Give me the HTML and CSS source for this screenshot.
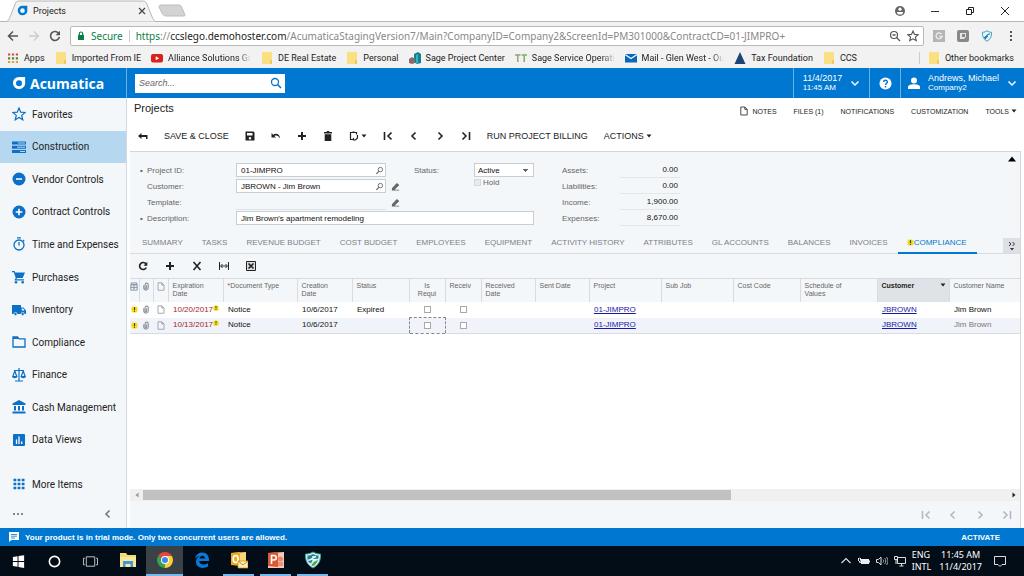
FILE: index.html
```
<!DOCTYPE html>
<html lang="en">
  <head>
    <meta charset="UTF-8" />
    <meta name="viewport" content="width=device-width, initial-scale=1.0" />
    <title>Projects</title>
    <link rel="stylesheet" href="styles.css">
  </head>
  <body>
    <!-- shared icons -->
    <svg class="sprite" aria-hidden="true">
      <symbol id="i-logo" viewBox="0 0 16 16"><path fill="currentColor" fill-rule="evenodd" d="M8 1h7v8a7 7 0 1 1-7-8zM8 4.800a3.400 3.400 0 1 0 0 6.800 3.400 3.400 0 0 0 0-6.800z"/></symbol>
      <symbol id="i-folder" viewBox="0 0 12 12"><path fill="#fbdf83" d="M1 0h10v12H1z"/><path fill="#f0c95a" d="M9 8h2v4H9z"/></symbol>
      <symbol id="i-search" viewBox="0 0 12 12"><circle cx="5" cy="5" r="3.500" fill="none" stroke="currentColor" stroke-width="1.300"/><path d="M7.500 7.500l3.500 3.500" stroke="currentColor" stroke-width="1.600"/></symbol>
      <symbol id="i-find" viewBox="0 0 10 10"><circle cx="6" cy="4" r="2.500" fill="none" stroke="currentColor"/><path d="M4.200 6L1.500 8.700" stroke="currentColor" stroke-width="1.300"/></symbol>
      <symbol id="i-down" viewBox="0 0 10 10"><path d="M1.500 3.500L5 7l3.500-3.500" fill="none" stroke="currentColor" stroke-width="1.500"/></symbol>
      <symbol id="i-caret" viewBox="0 0 6 6"><path fill="currentColor" d="M.5 1.500h5L3 4.500z"/></symbol>
      <symbol id="i-shield" viewBox="0 0 16 16"><path fill="#e8f7fb" stroke="#3a9cb8" stroke-width="1.300" d="M8 1c2 1.500 4 2 6 2 .3 6-1.500 9.500-6 12C3.500 12.500 1.700 9 2 3c2 0 4-.5 6-2z"/><path fill="none" stroke="#2379b8" stroke-width="1.500" d="M4 10c3 0 3-4 8-5M5 12l4-4"/></symbol>
      <symbol id="i-page" viewBox="0 0 10 12"><path fill="none" stroke="currentColor" d="M1 1h5l3 3v7H1zM6 1v3h3"/></symbol>
      <symbol id="i-clip" viewBox="0 0 8 10"><path fill="none" stroke="currentColor" stroke-width="1.200" d="M1.500 3.500v3a2.500 2.500 0 0 0 5 0V3a1.700 1.700 0 0 0-3.500 0v3.500a.8.8 0 0 0 1.700 0V3.500"/></symbol>
      <symbol id="i-warn" viewBox="0 0 8 8"><rect x=".5" y=".5" width="7" height="7" rx="2" fill="#f3dc1c"/><path d="M4 1.500v3M4 5.500v1" stroke="#333" stroke-width="1.300"/></symbol>
      <symbol id="i-plus" viewBox="0 0 10 10"><path d="M5 1v8M1 5h8" stroke="currentColor" stroke-width="2"/></symbol>
      <symbol id="i-first" viewBox="0 0 10 10"><path d="M1.500 1v8M8.500 1.500L5 5l3.500 3.500" fill="none" stroke="currentColor" stroke-width="1.600"/></symbol>
      <symbol id="i-prev" viewBox="0 0 10 10"><path d="M6.500 1.500L3 5l3.500 3.500" fill="none" stroke="currentColor" stroke-width="1.600"/></symbol>
      <symbol id="i-next" viewBox="0 0 10 10"><path d="M3.500 1.500L7 5 3.500 8.500" fill="none" stroke="currentColor" stroke-width="1.600"/></symbol>
      <symbol id="i-last" viewBox="0 0 10 10"><path d="M8.500 1v8M1.500 1.500L5 5 1.500 8.500" fill="none" stroke="currentColor" stroke-width="1.600"/></symbol>
      <symbol id="i-pencil" viewBox="0 0 10 10"><path fill="currentColor" d="M1 7l5.500-6 2.700 2.200L4 8.500h5v1H1z"/></symbol>
    </svg>

    <div class="tabstrip">
      <div class="browser-tab">
        <svg class="tab-shape" viewBox="0 0 158 22" preserveAspectRatio="none"><path d="M0 22C5 22 5 19 7 15L11 5c1-3 2-4 5-4h126c3 0 4 1 5 4l5 12c2 4 3 5 6 5z" fill="#f2f2f2" stroke="#b5b5b5"/></svg>
        <svg class="icon-s blue"><use href="#i-logo"/></svg>
        <span>Projects</span>
        <button class="tab-close" aria-label="Close tab"><svg viewBox="0 0 8 8"><path d="M1 1l6 6M7 1L1 7" stroke="#444" stroke-width="1.200"/></svg></button>
      </div>
      <svg class="new-tab" viewBox="0 0 28 13"><path d="M3 1h18c2 0 2 1 3 3l3 7c0 1 0 1-2 1H8c-2 0-3-1-4-3L1 3c0-1 0-2 2-2z" fill="#d3d3d3" stroke="#bdbdbd"/></svg>
      <div class="window-buttons">
        <button aria-label="Profile"><svg viewBox="0 0 12 12"><circle cx="6" cy="6" r="5" fill="#666"/><circle cx="6" cy="4.200" r="1.600" fill="#fff"/><path d="M3 7h6c0 2-1 2.500-3 2.500S3 9 3 7z" fill="#fff"/></svg></button>
        <button aria-label="Minimize"><svg viewBox="0 0 12 12"><path d="M2 6.500h8" stroke="#333"/></svg></button>
        <button aria-label="Restore"><svg viewBox="0 0 12 12"><path d="M2.500 4.500h5v5h-5zM4.500 4V2.500h5v5H8" fill="none" stroke="#222"/></svg></button>
        <button aria-label="Close"><svg viewBox="0 0 12 12"><path d="M2 2l8 8M10 2l-8 8" stroke="#222"/></svg></button>
      </div>
    </div>

    <div class="browser-bar">
      <button aria-label="Back"><svg viewBox="0 0 12 12"><path d="M11 6H2M6 1.500L1.500 6 6 10.500" fill="none" stroke="#555" stroke-width="1.500"/></svg></button>
      <button aria-label="Forward"><svg viewBox="0 0 12 12"><path d="M1 6h9M6 1.500L10.500 6 6 10.500" fill="none" stroke="#ccc" stroke-width="1.300"/></svg></button>
      <button aria-label="Reload"><svg viewBox="0 0 12 12"><path d="M9.800 3.500A4.500 4.500 0 1 0 10.400 7" fill="none" stroke="#555" stroke-width="1.600"/><path d="M11 .8v4.500H6.500z" fill="#555"/></svg></button>
      <div class="address">
        <svg class="lock" viewBox="0 0 8 10"><path d="M1 4h6v5H1z" fill="#0b8043"/><path d="M2.300 4V2.700a1.700 1.700 0 0 1 3.400 0V4" fill="none" stroke="#0b8043" stroke-width="1.200"/></svg>
        <span class="secure">Secure</span>
        <div class="url" role="textbox" aria-label="Address"><span class="scheme">https</span>://<span class="host">ccslego.demohoster.com</span>/AcumaticaStagingVersion7/Main?CompanyID=Company2&amp;ScreenId=PM301000&amp;ContractCD=01-JIMPRO+</div>
        <button aria-label="Zoom"><svg viewBox="0 0 12 12"><circle cx="5" cy="5" r="3.500" fill="none" stroke="#555" stroke-width="1.200"/><path d="M7.500 7.500l3.500 3.500M3.500 5h3" stroke="#555" stroke-width="1.300"/></svg></button>
        <button aria-label="Bookmark"><svg viewBox="0 0 12 12"><path d="M6 1l1.500 3.400 3.700.3-2.800 2.400.9 3.600L6 8.800l-3.300 1.900.9-3.600L.8 4.700l3.700-.3z" fill="none" stroke="#555" stroke-width="1.100"/></svg></button>
      </div>
      <div class="extensions">
        <button aria-label="Extension"><svg viewBox="0 0 12 12"><path d="M0 0h12v12H0z" fill="#b5b5b5"/><path d="M8.500 4A3 3 0 1 0 9 6.500H6.500" fill="none" stroke="#eee" stroke-width="1.300"/></svg></button>
        <button aria-label="Extension"><svg viewBox="0 0 12 12"><rect width="12" height="12" rx="2" fill="#888"/><path d="M3 3h6v4L7 9H3z" fill="#e5e5e5"/><path d="M5 4h3v3H5z" fill="#888"/></svg></button>
        <button aria-label="Security"><svg><use href="#i-shield"/></svg></button>
        <button aria-label="Menu"><svg viewBox="0 0 12 12"><path d="M6 1v2M6 5v2M6 9v2" stroke="#555" stroke-width="2"/></svg></button>
      </div>
    </div>

    <nav class="bookmarks">
      <a href="#"><svg viewBox="0 0 12 12"><path d="M1 2.500h10" stroke="#d9443f" stroke-width="2.200" stroke-dasharray="2.200 1.700"/><path d="M1 6.300h10" stroke="#4a8a4a" stroke-width="2.200" stroke-dasharray="2.200 1.700"/><path d="M1 10h10" stroke="#e0a030" stroke-width="2.200" stroke-dasharray="2.200 1.700"/></svg><span>Apps</span></a>
      <a href="#"><svg><use href="#i-folder"/></svg><span>Imported From IE</span></a>
      <a href="#"><svg viewBox="0 0 12 12"><rect y="2" width="12" height="8.500" rx="2" fill="#d8201c"/><path d="M4.700 4.200l3.500 2-3.500 2z" fill="#fff"/></svg><span class="fade">Alliance Solutions Gr</span></a>
      <a href="#"><svg><use href="#i-folder"/></svg><span>DE Real Estate</span></a>
      <a href="#"><svg><use href="#i-folder"/></svg><span>Personal</span></a>
      <a href="#"><svg viewBox="0 0 12 12"><path d="M5 2l4-2 3 2v9l-4 1-3-2z" fill="#137f91"/><path d="M7 3l2-1v9l-2 1z" fill="#35b3c0"/><path d="M0 7l3-2 3 2v4l-3 1-3-1z" fill="#8b6b68"/></svg><span>Sage Project Center</span></a>
      <a href="#"><svg viewBox="0 0 12 12"><path d="M0 3h5.500M2.800 3v7" stroke="#98a083" stroke-width="1.500"/><path d="M6.500 3H12M9.200 3v7" stroke="#82aa63" stroke-width="1.500"/></svg><span class="fade">Sage Service Operati</span></a>
      <a href="#"><svg viewBox="0 0 12 12"><path d="M0 2h12v8.500H0z" fill="#0968b9"/><path d="M0 2.500l6 4 6-4" fill="none" stroke="#fff" stroke-width="1.200"/></svg><span class="fade">Mail - Glen West - Ou</span></a>
      <a href="#"><svg viewBox="0 0 12 12"><path d="M6 0l5.500 12H.5z" fill="#1d4675"/></svg><span>Tax Foundation</span></a>
      <a href="#"><svg><use href="#i-folder"/></svg><span>CCS</span></a>
      <a href="#" class="other"><svg><use href="#i-folder"/></svg><span>Other bookmarks</span></a>
    </nav>

    <header class="app-header">
      <a href="#" class="brand"><svg><use href="#i-logo"/></svg><span>Acumatica</span></a>
      <form class="search">
        <input type="search" placeholder="Search..." aria-label="Search">
        <button type="button" aria-label="Search"><svg><use href="#i-search"/></svg></button>
      </form>
      <button class="head-item date"><span class="two-line"><span>11/4/2017</span><small>11:45 AM</small></span><svg><use href="#i-down"/></svg></button>
      <button class="head-item help" aria-label="Help"><svg viewBox="0 0 14 14"><circle cx="7" cy="7" r="6.500" fill="#fff"/><path d="M5 5.500c0-3 4.200-2.500 4 0C9 7 7 6.800 7 8.500M7 9.800v1.500" fill="none" stroke="#0077d0" stroke-width="1.500"/></svg></button>
      <button class="head-item user"><svg class="person" viewBox="0 0 12 12"><circle cx="6" cy="3.500" r="3" fill="#fff"/><path d="M0 12V10c0-2 3-2.800 6-2.800s6 .8 6 2.800v2z" fill="#fff"/></svg><span class="two-line"><span>Andrews, Michael</span><small>Company2</small></span><svg><use href="#i-down"/></svg></button>
    </header>

    <div class="workspace">
      <aside class="sidebar">
        <nav class="menu">
          <a href="#"><svg viewBox="0 0 14 14"><path d="M7 1l1.700 4.200 4.500.3-3.500 2.900 1.100 4.400L7 10.400l-3.800 2.400 1.100-4.400L.8 5.500l4.500-.3z" fill="none" stroke="currentColor" stroke-width="1.200"/></svg>Favorites</a>
          <a href="#" class="active"><svg viewBox="0 0 14 14"><path d="M0 1.500h14v3H0zM0 5.700h14v3H0zM0 10h14v3H0z" fill="currentColor"/><path d="M6 3h7M5 7.200h8M8 11.500h5" stroke="#b5d8f0"/></svg>Construction</a>
          <a href="#"><svg viewBox="0 0 14 14"><circle cx="7" cy="7" r="6.500" fill="currentColor"/><path d="M4 7h6" stroke="#fff" stroke-width="1.500"/></svg>Vendor Controls</a>
          <a href="#"><svg viewBox="0 0 14 14"><circle cx="7" cy="7" r="6.500" fill="currentColor"/><path d="M3.700 7h6.600M7 3.700v6.600" stroke="#fff" stroke-width="1.600"/></svg>Contract Controls</a>
          <a href="#"><svg viewBox="0 0 14 14"><circle cx="7" cy="8" r="5" fill="none" stroke="currentColor" stroke-width="1.300"/><path d="M5 .8h4M7 5v3.500M11 3l1.200 1.200" stroke="currentColor" stroke-width="1.300"/></svg>Time and Expenses</a>
          <a href="#"><svg viewBox="0 0 14 14"><path d="M0 1h2.500l.7 1.500H13L10.700 8H5l-.7 1.300H12v1.200H2.500L3.700 7.800 1.800 2.200H0z" fill="currentColor"/><circle cx="4" cy="12.300" r="1.300" fill="currentColor"/><circle cx="10.700" cy="12.300" r="1.300" fill="currentColor"/></svg>Purchases</a>
          <a href="#"><svg viewBox="0 0 14 14"><path d="M0 2h9v2.500h2.500L14 7.500v3.500H0z" fill="currentColor"/><path d="M9.800 5.500h1.400L12.600 7.500H9.800z" fill="#fff"/><circle cx="3.500" cy="11" r="1.600" fill="currentColor" stroke="#f4f7fa" stroke-width=".7"/><circle cx="10.700" cy="11" r="1.600" fill="currentColor" stroke="#f4f7fa" stroke-width=".7"/></svg>Inventory</a>
          <a href="#"><svg viewBox="0 0 14 14"><path d="M1 2h4.500L7 3.800h6v8.200H1z" fill="none" stroke="currentColor" stroke-width="1.300"/><path d="M1 2h4.500L7 4H1z" fill="currentColor"/></svg>Compliance</a>
          <a href="#"><svg viewBox="0 0 14 14"><path d="M7 0v12.500M3 13h8M2 2.500h10M2.800 3L.8 8.500M2.800 3l2 5.500M11.200 3l-2 5.500M11.200 3l2 5.500" fill="none" stroke="currentColor" stroke-width="1.200"/><path d="M0 8h5.500c0 3-5.500 3-5.500 0zM8.500 8H14c0 3-5.500 3-5.500 0z" fill="currentColor"/></svg>Finance</a>
          <a href="#"><svg viewBox="0 0 14 14"><path d="M7 0l6.500 3.500V5H.5V3.500zM2 6h2v4.500H2zM6 6h2v4.500H6zM10 6h2v4.500h-2zM.5 11.500h13v2H.5z" fill="currentColor"/></svg>Cash Management</a>
          <a href="#"><svg viewBox="0 0 14 14"><rect x="1" y="1" width="12" height="12" rx="1" fill="currentColor"/><path d="M4.500 6.500V11M7 3.500V11M9.700 8.500V11" stroke="#fff" stroke-width="1.300"/></svg>Data Views</a>
        </nav>
        <a href="#" class="more"><svg viewBox="0 0 14 14"><path d="M1.500 3h11M1.500 7h11M1.500 11h11" stroke="currentColor" stroke-width="2.600" stroke-dasharray="2.800 1.300"/></svg>More Items</a>
        <div class="side-foot">
          <button aria-label="Options"><svg viewBox="0 0 12 12"><path d="M1 6h10" stroke="#888" stroke-width="2" stroke-dasharray="2 2"/></svg></button>
          <button aria-label="Collapse menu"><svg><use href="#i-prev"/></svg></button>
        </div>
      </aside>

      <main>
        <div class="title-row">
          <h1>Projects</h1>
          <div class="page-links">
            <button><svg><use href="#i-page"/></svg>NOTES</button>
            <button>FILES (1)</button>
            <button>NOTIFICATIONS</button>
            <button>CUSTOMIZATION</button>
            <button>TOOLS<svg class="caret"><use href="#i-caret"/></svg></button>
          </div>
        </div>

        <div class="actions">
          <button aria-label="Back"><svg viewBox="0 0 10 10"><path d="M0 5l3.500-3v2H9.500v4H8V6H3.500v2z" fill="currentColor"/></svg></button>
          <button class="label">SAVE &amp; CLOSE</button>
          <button aria-label="Save"><svg viewBox="0 0 10 10"><path fill-rule="evenodd" d="M.5.5h8l1 1v8h-9zM2 2v2.500h5.500V2zM5 6a1.300 1.300 0 1 0 0 2.600A1.300 1.300 0 0 0 5 6z" fill="currentColor"/></svg></button>
          <button aria-label="Undo"><svg viewBox="0 0 10 10"><path d="M.5 2v4.500H5L3.400 5C5.500 3.800 7.500 4.800 9 7.500 9 3.500 5.500 1.500 2.200 3.700z" fill="currentColor"/></svg></button>
          <button aria-label="Add"><svg><use href="#i-plus"/></svg></button>
          <button aria-label="Delete"><svg viewBox="0 0 10 10"><path d="M1 1h2.500L4 0h2l.5 1H9v1.500H1zM1.700 3.200h6.600V10H1.700z" fill="currentColor"/></svg></button>
          <button aria-label="Clipboard"><svg viewBox="0 0 10 10"><path d="M4 8.500H1.500v-7h6v2M3.500 1h2M8.500 4v3L6.500 9H4.500V7" fill="none" stroke="currentColor" stroke-width="1.200"/></svg><svg class="caret"><use href="#i-caret"/></svg></button>
          <button aria-label="First"><svg><use href="#i-first"/></svg></button>
          <button aria-label="Previous"><svg><use href="#i-prev"/></svg></button>
          <button aria-label="Next"><svg><use href="#i-next"/></svg></button>
          <button aria-label="Last"><svg><use href="#i-last"/></svg></button>
          <button class="label">RUN PROJECT BILLING</button>
          <button class="label">ACTIONS<svg class="caret"><use href="#i-caret"/></svg></button>
        </div>

        <section class="panel">
          <form class="summary">
            <div class="fields">
              <label class="name req" for="projectId">Project ID:</label>
              <div class="lookup"><input id="projectId" type="text" value="01-JIMPRO"><button type="button" aria-label="Find project"><svg><use href="#i-find"/></svg></button></div>
              <span></span>
              <label for="status">Status:</label>
              <select id="status"><option>Active</option></select>

              <label class="name" for="customer">Customer:</label>
              <div class="lookup"><input id="customer" type="text" value="JBROWN - Jim Brown"><button type="button" aria-label="Find customer"><svg><use href="#i-find"/></svg></button></div>
              <button type="button" class="edit" aria-label="Edit customer"><svg><use href="#i-pencil"/></svg></button>
              <span></span>
              <label class="hold"><input type="checkbox" disabled>Hold</label>

              <label class="name" for="template">Template:</label>
              <input id="template" class="flat" type="text" readonly>
              <button type="button" class="edit" aria-label="Edit template"><svg><use href="#i-pencil"/></svg></button>
              <span></span>
              <span></span>

              <label class="name req" for="description">Description:</label>
              <input id="description" class="wide" type="text" value="Jim Brown's apartment remodeling">
            </div>
            <div class="totals">
              <label for="assets">Assets:</label><input id="assets" type="text" value="0.00" readonly>
              <label for="liabilities">Liabilities:</label><input id="liabilities" type="text" value="0.00" readonly>
              <label for="income">Income:</label><input id="income" type="text" value="1,900.00" readonly>
              <label for="expenses">Expenses:</label><input id="expenses" type="text" value="8,670.00" readonly>
            </div>
            <button type="button" class="collapse" aria-label="Collapse"><svg viewBox="0 0 8 6"><path d="M0 5.500L4 .5l4 5z" fill="#000"/></svg></button>
          </form>

          <div class="tabs">
            <button>SUMMARY</button>
            <button>TASKS</button>
            <button>REVENUE BUDGET</button>
            <button>COST BUDGET</button>
            <button>EMPLOYEES</button>
            <button>EQUIPMENT</button>
            <button>ACTIVITY HISTORY</button>
            <button>ATTRIBUTES</button>
            <button>GL ACCOUNTS</button>
            <button>BALANCES</button>
            <button>INVOICES</button>
            <button class="current"><svg><use href="#i-warn"/></svg>COMPLIANCE</button>
            <button class="overflow" aria-label="More tabs"><svg viewBox="0 0 8 10"><path d="M1 1l2 2-2 2M4.500 1l2 2-2 2" fill="none" stroke="#333"/><path d="M2 7h4L4 9.500z" fill="#333"/></svg></button>
          </div>

          <div class="grid-tools">
            <button aria-label="Refresh"><svg viewBox="0 0 10 10"><path d="M8 3A3.500 3.500 0 1 0 8.300 6.500" fill="none" stroke="currentColor" stroke-width="1.700"/><path d="M9.300.8v4H5.500z" fill="currentColor"/></svg></button>
            <button aria-label="Add row"><svg><use href="#i-plus"/></svg></button>
            <button aria-label="Delete row"><svg viewBox="0 0 10 10"><path d="M1.500 1l7 8M8.500 1l-7 8" stroke="currentColor" stroke-width="1.600"/></svg></button>
            <button aria-label="Fit to screen"><svg viewBox="0 0 10 10"><path d="M.5 1v8M9.500 1v8M2 5h6M3.500 3L1.500 5l2 2M6.500 3l2 2-2 2" fill="none" stroke="currentColor"/></svg></button>
            <button aria-label="Export to Excel"><svg viewBox="0 0 10 10"><path d="M.5.500h9v9h-9z" fill="#ddd" stroke="currentColor"/><path d="M2.500 2.500l5 5M7.500 2.500l-5 5" stroke="currentColor" stroke-width="1.700"/></svg></button>
          </div>

          <div class="grid-body">
            <table>
              <colgroup>
                <col class="c-tiny"><col class="c-clip"><col class="c-note"><col class="c-date"><col class="c-type"><col class="c-date"><col class="c-status"><col class="c-check"><col class="c-check"><col class="c-sent"><col class="c-sent"><col class="c-name"><col class="c-name"><col class="c-code"><col class="c-sched"><col class="c-name"><col>
              </colgroup>
              <thead>
                <tr>
                  <th class="ic"><svg viewBox="0 0 8 10"><path d="M1 1h6v2H1zM.5 3h7v6h-7zM.5 6h7M3 4.500h2M3 7.500h2" fill="none" stroke="#7f8b9c"/></svg></th>
                  <th class="ic"><svg><use href="#i-clip"/></svg></th>
                  <th class="ic"><svg><use href="#i-page"/></svg></th>
                  <th>Expiration<br>Date</th>
                  <th class="must">Document Type</th>
                  <th>Creation<br>Date</th>
                  <th>Status</th>
                  <th class="mid">Is<br>Requi</th>
                  <th>Receiv</th>
                  <th>Received<br>Date</th>
                  <th>Sent Date</th>
                  <th>Project</th>
                  <th>Sub Job</th>
                  <th>Cost Code</th>
                  <th>Schedule of<br>Values</th>
                  <th class="sorted"><span>Customer<svg class="caret"><use href="#i-caret"/></svg></span></th>
                  <th>Customer Name</th>
                </tr>
              </thead>
              <tbody>
                <tr>
                  <td class="ic"><svg><use href="#i-warn"/></svg></td>
                  <td class="ic"><svg><use href="#i-clip"/></svg></td>
                  <td class="ic"><svg><use href="#i-page"/></svg></td>
                  <td class="expired">10/20/2017<svg><use href="#i-warn"/></svg></td>
                  <td>Notice</td>
                  <td>10/6/2017</td>
                  <td>Expired</td>
                  <td class="mid"><input type="checkbox" aria-label="Is required"></td>
                  <td class="mid"><input type="checkbox" aria-label="Received"></td>
                  <td></td>
                  <td></td>
                  <td><a href="#">01-JIMPRO</a></td>
                  <td></td>
                  <td></td>
                  <td></td>
                  <td><a href="#">JBROWN</a></td>
                  <td>Jim Brown</td>
                </tr>
                <tr class="selected">
                  <td class="ic"><svg><use href="#i-warn"/></svg></td>
                  <td class="ic"><svg><use href="#i-clip"/></svg></td>
                  <td class="ic"><svg><use href="#i-page"/></svg></td>
                  <td class="expired">10/13/2017<svg><use href="#i-warn"/></svg></td>
                  <td>Notice</td>
                  <td>10/6/2017</td>
                  <td></td>
                  <td class="mid focus"><input type="checkbox" aria-label="Is required"></td>
                  <td class="mid"><input type="checkbox" aria-label="Received"></td>
                  <td></td>
                  <td></td>
                  <td><a href="#">01-JIMPRO</a></td>
                  <td></td>
                  <td></td>
                  <td></td>
                  <td><a href="#">JBROWN</a></td>
                  <td class="dim">Jim Brown</td>
                </tr>
              </tbody>
            </table>
          </div>

          <div class="scrollbar">
            <button aria-label="Scroll left"><svg viewBox="0 0 6 6"><path d="M4.500.5v5L1.500 3z" fill="#999"/></svg></button>
            <div class="track"><div class="thumb"></div></div>
            <button aria-label="Scroll right"><svg viewBox="0 0 6 6"><path d="M1.500.5v5L4.500 3z" fill="#222"/></svg></button>
          </div>
          <div class="pager">
            <button aria-label="First page"><svg><use href="#i-first"/></svg></button>
            <button aria-label="Previous page"><svg><use href="#i-prev"/></svg></button>
            <button aria-label="Next page"><svg><use href="#i-next"/></svg></button>
            <button aria-label="Last page"><svg><use href="#i-last"/></svg></button>
          </div>
        </section>
      </main>
    </div>

    <div class="trial">
      <svg viewBox="0 0 10 10"><path d="M0 0h10v8H2.500L0 10z" fill="#fff"/><path d="M2 2.500h6M2 4.200h6M2 6h4" stroke="#0077d0" stroke-width=".8"/></svg>
      <span>Your product is in trial mode. Only two concurrent users are allowed.</span>
      <button>ACTIVATE</button>
    </div>

    <footer class="taskbar">
      <button class="sys" aria-label="Start"><svg viewBox="0 0 16 16"><path d="M2 3.200l5-.8v5.100H2zM8 2.200l6-1v6.300H8zM2 8.500h5v5.100l-5-.8zM8 8.500h6v6.300l-6-1z" fill="#fff"/></svg></button>
      <button class="sys" aria-label="Cortana"><svg viewBox="0 0 16 16"><circle cx="8" cy="8" r="5.500" fill="none" stroke="#fff" stroke-width="1.700"/></svg></button>
      <button class="sys" aria-label="Task view"><svg viewBox="0 0 16 16"><path d="M3.500 3h9v10h-9zM2 4.500H.5v7H2M14 4.500h1.500v7H14" fill="none" stroke="#ccc"/></svg></button>
      <div class="apps">
        <button aria-label="File Explorer"><svg viewBox="0 0 18 18"><path d="M1 2h6l1.500 2H17v12H1z" fill="#f6d774"/><path d="M1 6h16v10H1z" fill="#fae69b"/><path d="M4 10h10v6h-2.500v-3h-5v3H4z" fill="#3a9ad5"/></svg></button>
        <button class="on" aria-label="Chrome"><svg viewBox="0 0 18 18"><path d="M9 9L2.100 5A8 8 0 0 1 15.900 5z" fill="#e04a3c"/><path d="M9 9l6.900-4A8 8 0 0 1 9 17z" fill="#fad133"/><path d="M9 9v8A8 8 0 0 1 2.100 5z" fill="#35a351"/><path d="M9 5h6.900L12 12z" fill="#fad133"/><circle cx="9" cy="9" r="4" fill="#fff"/><circle cx="9" cy="9" r="3" fill="#4284f3"/></svg></button>
        <button aria-label="Edge"><svg viewBox="0 0 18 18"><path d="M2 8C3 3 6 1.500 9.300 1.500c4.500 0 7 3.200 6.700 8.500H6.200c.3 4 5 4.500 8.800 2.200v3.300C9.500 18.500 2.800 16.500 3 10.500 3 7.800 5 6 6.800 5 4.500 5.300 3 6.500 2 8zm4.500-.5h5.500c0-3.800-5-3.800-5.500 0z" fill="#0b78d8"/></svg></button>
        <button class="open" aria-label="Outlook"><svg viewBox="0 0 18 18"><path d="M1 2l15-1v13H1z" fill="#f8d679"/><path d="M1 2l9-1v14l-9-1z" fill="#efa91f"/><ellipse cx="5.700" cy="8" rx="2.500" ry="3.500" fill="none" stroke="#fff" stroke-width="1.600"/><path d="M8 10h10v7H8z" fill="#fcedb9" stroke="#c58c19" stroke-width=".7"/><path d="M8 10l5 4 5-4" fill="none" stroke="#c58c19"/></svg></button>
        <button class="open" aria-label="PowerPoint"><svg viewBox="0 0 18 18"><path d="M1 2l16-1v16H1z" fill="#f8cbb7"/><path d="M1 2l10-1v15L1 15z" fill="#d95a34"/><path d="M4.500 13V4.500H7c3 0 3 4.500 0 4.500H4.500" fill="none" stroke="#fff" stroke-width="1.600"/><circle cx="13.500" cy="8" r="2.500" fill="#e68664"/><path d="M11 12h5M11 14h5" stroke="#d95a34"/></svg></button>
        <button class="open" aria-label="Security"><svg viewBox="0 0 18 18"><path d="M9 1c2.500 1.500 5 2 7.500 2 .3 7-2 11-7.500 14C3.500 14 1.200 10 1.500 3 4 3 6.500 2.500 9 1z" fill="#dff0ee" stroke="#2fa2a0"/><path d="M9 3c2 1 3.500 1.500 5.500 1.600 0 1.400 0 2.400-.3 3.400C11 7 8 9 7 12.500L4.500 11C3.500 9 3.300 7 3.400 4.600 5.500 4.500 7 4 9 3z" fill="#16859a"/><path d="M14 9c-1 3-2.500 4.700-5 6.300l-1.500-1C9 11.500 11 9.500 14 9z" fill="#4ba852"/><path d="M4 9c3 1 5-3 8-3.500M9 5v4h3" fill="none" stroke="#fff" stroke-width="1.300"/></svg></button>
      </div>
      <div class="tray">
        <button aria-label="Hidden icons"><svg viewBox="0 0 12 12"><path d="M1.500 8L6 3.500 10.500 8" fill="none" stroke="#ddd" stroke-width="1.200"/></svg></button>
        <button aria-label="Battery"><svg viewBox="0 0 12 12"><path d="M3 4h8v5H3z" fill="#eee"/><path d="M11 5.500h1v2h-1zM0 3h3v3H0zM1 1.500v5c0 1 .5 1.500 2 1.500" fill="#eee"/></svg></button>
        <button aria-label="Volume"><svg viewBox="0 0 12 12"><path d="M.5 4.500h2L5 2v8L2.500 7.500h-2z" fill="none" stroke="#ddd"/><path d="M7 4.500c.8 1 .8 2 0 3M8.700 3c1.500 2 1.500 4 0 6M10.500 2c2 3 2 5 0 8" fill="none" stroke="#aaa"/></svg></button>
        <button aria-label="Network"><svg viewBox="0 0 12 12"><path d="M3.500 2.500h8v6h-8zM5.500 11h4M7.500 8.500V11M.5 1.500h3v3h-3zM2 4.500V9" fill="none" stroke="#ddd"/></svg></button>
        <span class="stack"><span>ENG</span><span>INTL</span></span>
        <span class="stack clock"><span>11:45 AM</span><span>11/4/2017</span></span>
        <button aria-label="Notifications"><svg viewBox="0 0 12 12"><path d="M.5 1.500h11v8H8L6 11.500 4 9.500H.5z" fill="none" stroke="#ddd"/></svg></button>
      </div>
    </footer>
  </body>
</html>
```

FILE: styles.css
```
* {
  box-sizing: border-box;
}

body {
  margin: 0;
  height: 100vh;
  display: flex;
  flex-direction: column;
  overflow: hidden;
  background: #fff;
  color: #222;
  font-family: "Liberation Sans", Arial, sans-serif;
  font-size: 8px;
}

button, input, select {
  margin: 0;
  padding: 0;
  border: 0;
  background: none;
  color: inherit;
  font: inherit;
}

button {
  display: flex;
  align-items: center;
  justify-content: center;
  white-space: nowrap;
  cursor: pointer;
}

a {
  color: inherit;
  text-decoration: none;
}

svg {
  display: block;
  flex: none;
  width: 12px;
  height: 12px;
}

.sprite {
  position: absolute;
  width: 0;
  height: 0;
}

svg.caret {
  width: 6px;
  height: 6px;
  margin-left: 2px;
}

.blue {
  color: #0077d0;
}

/* browser window */
.tabstrip, .browser-bar, .bookmarks {
  flex: none;
  display: flex;
  align-items: center;
  font-family: "Noto Sans", "Open Sans", sans-serif;
}

.tabstrip {
  height: 22px;
  padding-left: 4px;
  border-bottom: 1px solid #b5b5b5;
}

.browser-tab {
  position: relative;
  display: flex;
  align-items: center;
  gap: 5px;
  width: 154px;
  height: 22px;
  padding: 0 12px 0 13px;
  font-family: Roboto, sans-serif;
  font-size: 9px;
}

.browser-tab > * {
  position: relative;
}

.browser-tab .tab-shape {
  position: absolute;
  left: 0;
  top: 0;
  width: 100%;
  height: 100%;
}

.icon-s {
  width: 11px;
  height: 11px;
}

.tab-close {
  margin-left: auto;
}

.tab-close svg {
  width: 8px;
  height: 8px;
}

.new-tab {
  width: 28px;
  height: 13px;
}

.window-buttons {
  display: flex;
  gap: 23px;
  margin-left: auto;
  padding-right: 13px;
}

.browser-bar {
  height: 27px;
  gap: 9px;
  padding: 0 7px;
  background: #f2f2f2;
}

.address {
  flex: 1;
  display: flex;
  align-items: center;
  height: 20px;
  gap: 6px;
  padding: 0 4px 0 6px;
  border: 1px solid #b9b9b9;
  border-radius: 2px;
  background: #fff;
  font-size: 10px;
}

.lock {
  width: 8px;
  height: 10px;
}

.secure {
  padding-right: 6px;
  border-right: 1px solid #ccc;
  line-height: 12px;
  color: #0b8043;
}

.url {
  flex: 1;
  min-width: 0;
  overflow: hidden;
  white-space: nowrap;
  color: #888;
}

.scheme {
  color: #0b8043;
}

.host {
  color: #222;
}

.extensions {
  display: flex;
  gap: 12px;
}

.bookmarks {
  height: 19px;
  gap: 10px;
  padding: 0 10px 2px 7px;
  background: #f2f2f2;
  font-family: Roboto, sans-serif;
  font-size: 9px;
}

.bookmarks a {
  display: flex;
  align-items: center;
  gap: 5px;
  white-space: nowrap;
}

.fade {
  -webkit-mask-image: linear-gradient(to right, #000 85%, transparent);
  mask-image: linear-gradient(to right, #000 85%, transparent);
}

.bookmarks .other {
  margin-left: auto;
  padding-left: 8px;
  border-left: 1px solid #ccc;
}

/* application header */
.app-header {
  flex: none;
  display: flex;
  height: 30px;
  background: #0077d0;
  color: #fff;
}

.brand {
  display: flex;
  align-items: center;
  gap: 4px;
  width: 127px;
  padding-left: 12px;
  border-right: 1px solid #69b0e4;
  font-family: "Open Sans", sans-serif;
  font-size: 14px;
  font-weight: 700;
}

.brand svg {
  width: 14px;
  height: 14px;
}

.search {
  display: flex;
  align-items: center;
  align-self: center;
  width: 150px;
  height: 19px;
  margin: 0 auto 0 8px;
  padding: 0 3px 0 4px;
  background: #fff;
  color: #0077d0;
}

.search input {
  flex: 1;
  min-width: 0;
  outline: 0;
  font-size: 9px;
}

.search input::placeholder {
  color: #666;
  font-style: italic;
}

.head-item {
  gap: 8px;
  border-left: 1px solid #69b0e4;
  text-align: left;
}

.date {
  width: 76px;
}

.help {
  width: 31px;
}

.user {
  width: 124px;
}

.two-line {
  display: flex;
  flex-direction: column;
  font-size: 9px;
  line-height: 10px;
}

.two-line small {
  font-size: 8px;
}

.head-item svg {
  width: 10px;
  height: 10px;
}

.head-item .person {
  width: 12px;
  height: 12px;
}

.help svg {
  width: 13px;
  height: 13px;
}

/* left menu */
.workspace {
  flex: 1;
  min-height: 0;
  display: flex;
}

.sidebar {
  flex: none;
  display: flex;
  flex-direction: column;
  width: 127px;
  border-right: 1px solid #d5d9dd;
  background: #f4f7fa;
  font-family: Roboto, sans-serif;
  font-size: 10px;
}

.menu {
  flex: 1;
  display: flex;
  flex-direction: column;
}

.menu a, .more {
  display: flex;
  align-items: center;
  gap: 6px;
  padding-left: 12px;
  white-space: nowrap;
}

.menu a {
  flex: 1;
}

.menu svg, .more svg {
  width: 14px;
  height: 14px;
  color: #0b70c6;
}

.menu .active {
  background: #b5d8f0;
}

.more {
  height: 32px;
  margin-top: 12px;
}

.side-foot {
  display: flex;
  align-items: center;
  justify-content: space-between;
  height: 28px;
  padding: 0 13px 0 12px;
  color: #777;
}

.side-foot button:last-child svg {
  width: 10px;
  height: 10px;
}

/* page */
main {
  flex: 1;
  min-width: 0;
  display: flex;
  flex-direction: column;
  padding: 0 3px;
}

.title-row {
  display: flex;
  align-items: center;
  justify-content: space-between;
  height: 20px;
  padding-left: 4px;
}

h1 {
  margin: 0;
  font-size: 11px;
  font-weight: 400;
}

.page-links {
  display: flex;
  align-items: center;
  gap: 17px;
  padding: 6px 4px 0 0;
  font-size: 7px;
}

.page-links svg {
  width: 8px;
  height: 10px;
  margin-right: 4px;
}

.page-links .caret {
  width: 6px;
  height: 6px;
  margin-right: 0;
}

.actions {
  display: flex;
  align-items: center;
  gap: 16px;
  height: 33px;
  padding: 2px 0 0 8px;
}

.actions svg {
  width: 10px;
  height: 10px;
}

.actions .label {
  font-size: 9px;
}

.actions .caret {
  width: 6px;
  height: 6px;
}

.panel {
  flex: 1;
  min-height: 0;
  display: flex;
  flex-direction: column;
  border: 1px solid #d3d7db;
  border-width: 1px 1px 0 0;
  background: #f4f7fa;
}

.summary {
  display: flex;
  align-items: flex-start;
  padding: 10px 4px 7px 10px;
  color: #666;
}

.fields {
  display: grid;
  grid-template-columns: 96px 150px 28px 60px 60px;
  grid-auto-rows: 16px;
  align-items: center;
}

.name {
  padding-left: 7px;
}

.name.req {
  padding-left: 0;
}

.req::before {
  content: "•";
  display: inline-block;
  width: 7px;
  font-weight: 700;
}

.summary input[type="text"], select {
  color: #111;
}

.lookup, select, .wide {
  height: 14px;
  border: 1px solid #c9ced3;
  background: #fff;
}

.lookup {
  display: flex;
  align-items: center;
  padding: 0 1px 0 4px;
}

.lookup input {
  flex: 1;
  min-width: 0;
}

.lookup svg {
  width: 9px;
  height: 9px;
}

.flat {
  height: 15px;
  border-bottom: 1px solid #dde1e5;
}

.wide {
  grid-column: 2 / 6;
  padding: 0 4px;
}

.edit svg {
  width: 9px;
  height: 9px;
}

.edit {
  justify-self: start;
  margin-left: 5px;
}

/* the arrow is made of two small triangles */
select {
  appearance: none;
  padding: 0 3px;
  background-image: linear-gradient(45deg, transparent 50%, #666 50%), linear-gradient(-45deg, transparent 50%, #666 50%);
  background-image: linear-gradient(to bottom left, #666 50%, transparent 50%), linear-gradient(to bottom right, #666 50%, transparent 50%);
  background-position: right 7px center, right 4px center;
  background-size: 3px 3px;
  background-repeat: no-repeat;
}

.hold {
  display: flex;
  align-items: center;
  align-self: start;
  gap: 2px;
}

input[type="checkbox"] {
  appearance: none;
  width: 7px;
  height: 7px;
  border: 1px solid #a9a9a9;
  background: #fff;
}

.hold input[type="checkbox"] {
  border-color: #d5d8db;
  background: #e8ebee;
}

.totals {
  display: grid;
  grid-template-columns: 58px 60px;
  grid-auto-rows: 16px;
  align-items: center;
  margin-left: 28px;
}

.totals input {
  min-width: 0;
  height: 15px;
  padding-right: 2px;
  border-bottom: 1px solid #e3e7ea;
  text-align: right;
}

.collapse {
  margin: -6px 0 0 auto;
}

.collapse svg {
  width: 8px;
  height: 6px;
}

.tabs {
  display: flex;
  height: 21px;
  padding-left: 3px;
  border-bottom: 1px solid #d8dce0;
  color: #7c8086;
}

.tabs button {
  height: 21px;
  padding: 0 10px 0 9px;
  border-bottom: 2px solid transparent;
}

.tabs svg {
  width: 7px;
  height: 7px;
}

.tabs .current {
  border-color: #0077d0;
  color: #0077d0;
}

.tabs .overflow {
  align-self: flex-end;
  width: 17px;
  height: 15px;
  margin-left: auto;
  padding: 0;
  border: 0;
  background: #dcdfe3;
}

.tabs .overflow svg {
  width: 8px;
  height: 10px;
}

.grid-tools {
  display: flex;
  align-items: center;
  gap: 17px;
  height: 24px;
  padding-left: 8px;
}

.grid-tools svg {
  width: 10px;
  height: 10px;
}

.grid-body {
  flex: 1;
  min-height: 0;
  overflow: hidden;
  background: #fff;
}

table {
  width: 100%;
  border-collapse: collapse;
  table-layout: fixed;
}

.c-tiny { width: 9px; }
.c-clip { width: 14px; }
.c-note { width: 15px; }
.c-date { width: 55px; }
.c-type { width: 74px; }
.c-status { width: 57px; }
.c-sent { width: 54px; }
.c-name { width: 72px; }
.c-check { width: 36px; }
.c-code { width: 67px; }
.c-sched { width: 77px; }

th {
  height: 23px;
  padding: 3px 0 0 4px;
  border: 1px solid #d8dce0;
  border-width: 1px 1px 0 0;
  background: #f4f7fa;
  color: #666;
  font-size: 7px;
  font-weight: 400;
  line-height: 8px;
  text-align: left;
  vertical-align: top;
  white-space: nowrap;
  overflow: hidden;
}

th:last-child {
  border-right: 0;
}

td {
  height: 16px;
  padding: 0 0 0 5px;
  line-height: 10px;
  white-space: nowrap;
  color: #111;
}

.must::before {
  content: "*";
  color: #d33;
}

.ic {
  padding-left: 0;
  padding-right: 0;
  color: #8a919a;
}

.ic svg {
  width: 8px;
  height: 9px;
  margin: 0 auto;
}

td.ic:first-child svg {
  width: 7px;
  height: 7px;
}

.mid {
  padding-left: 0;
  text-align: center;
}

td.mid input {
  display: block;
  margin: 0 auto;
}

.sorted {
  background: #dfe2e7;
  color: #222;
  font-weight: 700;
}

.sorted span {
  display: flex;
  justify-content: space-between;
  padding-right: 3px;
}

.expired {
  color: #a3282c;
}

.expired svg {
  display: inline-block;
  width: 6px;
  height: 6px;
  vertical-align: top;
}

td a {
  color: #1a1aa6;
  text-decoration: underline;
}

.selected td {
  border-bottom: 1px solid #d8dce0;
  background: #f0f4fa;
}

.selected .focus {
  border: 1px dashed #888;
}

.selected .dim {
  color: #777;
}

.scrollbar {
  display: flex;
  height: 12px;
  background: #f0f0f0;
}

.scrollbar button {
  width: 13px;
}

.scrollbar svg {
  width: 6px;
  height: 6px;
}

.track {
  flex: 1;
  padding: 1px 0;
}

.thumb {
  width: 68%;
  height: 10px;
  background: #c1c1c1;
}

.pager {
  display: flex;
  align-items: center;
  justify-content: flex-end;
  gap: 17px;
  height: 27px;
  padding-right: 8px;
  color: #b5b9be;
}

.pager svg {
  width: 10px;
  height: 10px;
}

/* trial notice */
.trial {
  flex: none;
  display: flex;
  align-items: center;
  gap: 6px;
  height: 18px;
  padding: 0 24px 0 9px;
  background: #0077d0;
  color: #fff;
  font-weight: 700;
}

.trial svg {
  width: 10px;
  height: 10px;
}

.trial button {
  margin-left: auto;
}

/* windows taskbar */
.taskbar {
  flex: none;
  display: flex;
  height: 30px;
  background: #020d17;
  color: #fff;
  font-family: "Noto Sans", "Open Sans", sans-serif;
  font-size: 9px;
}

.sys {
  width: 36px;
}

.sys svg {
  width: 15px;
  height: 15px;
}

.apps {
  display: flex;
  margin-left: 1px;
}

.apps button {
  width: 37px;
  border-bottom: 2px solid transparent;
}

.apps svg {
  width: 18px;
  height: 18px;
}

.apps .open, .apps .on {
  border-color: #76b9ed;
}

.apps .open {
  margin: 0 3px;
  width: 31px;
}

.apps .on {
  background: #3a4147;
}

.tray {
  display: flex;
  align-items: center;
  gap: 6px;
  margin-left: auto;
  padding-right: 18px;
}

.stack {
  display: flex;
  flex-direction: column;
  line-height: 12px;
}

.clock {
  margin: 0 6px 0 2px;
  text-align: center;
}
```
